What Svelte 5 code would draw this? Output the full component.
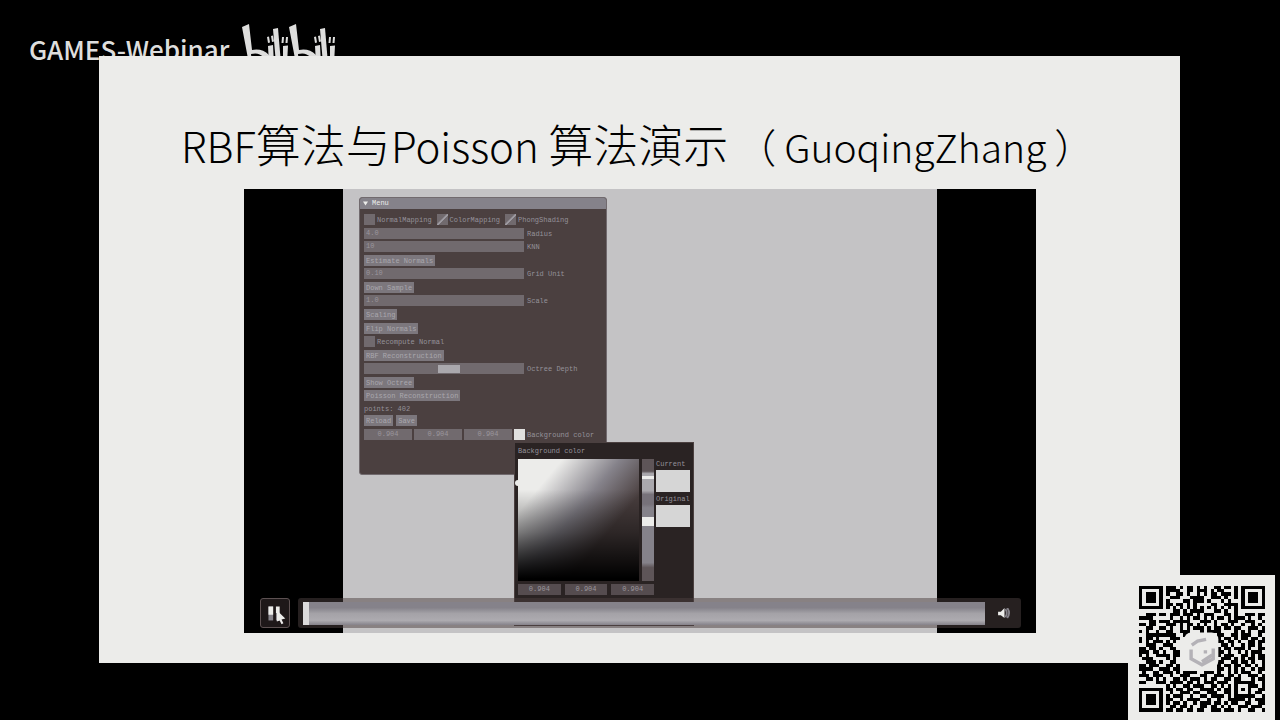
<script>
  let radius = $state('4.0');
  let knn = $state('10');
  let grid = $state('0.10');
  let scale = $state('1.0');
  let depth = $state(8);

  const channels = ['0.904', '0.904', '0.904'];

  const rows = [
    '0000000011101011010100110110100000000',
    '0000000011110011011101011000100000000',
    '0000000010011010010101101110100000000',
    '0000000001110001111001110100100000000',
    '0000000010000110111010001010000000000',
    '0000000011011010100001100111100000000',
    '0000000000000000000000000000000000000',
    '0000000000110101111000110100100000000',
    '0011101101110111010111000110100111011',
    '1111001001001010110101011010111010010',
    '0001101110111110001110100011100111001',
    '1101100011101011010100101101001001010',
    '0011001101001010111010110110110011101',
    '1010010011001110001011110000101010011',
    '0011110111100111000000011001101110010',
    '1011010001110000000000010110101101101',
    '1010111010100000000000011011010011011',
    '0011100111000000000000001101001011010',
    '1101101001100000000000010110111010011',
    '1110111100110000000000011010010101110',
    '1010010110110000000000010111001101011',
    '0111001010100000000000001110101011011',
    '0011101001100000000000011001101101001',
    '1101111011010000000000010110110110101',
    '1111001110110000000000011010101001011',
    '0100110111010111100111010010101110010',
    '1110111001001110001100111011010011101',
    '0011010100110101110101100110110001011',
    '1100011101111011010111011100000111001',
    '0000000010100110111001101010000101101',
    '0000000011011011001111010110000010011',
    '0000000001001110110011100110000110110',
    '0000000010111001001101111010000101001',
    '0000000011001011110010010011111010111',
    '0000000010110100101110110101100110011',
    '0000000001101101001101101010011101110',
    '0000000011011011011001110111010011001'
  ];

  const ring = (r, c, top, left, size) => {
    const y = r - top;
    const x = c - left;
    if (y < 0 || x < 0 || y >= size || x >= size) return null;
    const d = Math.min(x, y, size - 1 - x, size - 1 - y);
    return d !== 1;
  };

  function dark(r, c) {
    const parts = [ring(r, c, 0, 0, 7), ring(r, c, 0, 30, 7), ring(r, c, 30, 0, 7), ring(r, c, 28, 28, 5)];
    for (const p of parts) if (p !== null) return p;
    if (r === 6 && c > 7 && c < 29) return c % 2 === 0;
    if (c === 6 && r > 7 && r < 29) return r % 2 === 0;
    return rows[r][c] === '1';
  }

  let qr = '';
  for (let r = 0; r < 37; r++) {
    for (let c = 0; c < 37; c++) if (dark(r, c)) qr += `M${c} ${r}h1v1h-1z`;
  }
</script>

<div class="page">
  <header>
    <span class="brand">GAMES-Webinar</span>
    <svg class="logo" viewBox="0 0 96 40" role="img" aria-label="bilibili">
      <g id="bili">
        <path d="M0 3 7 0 10 26Q20 24 27 31L27 40H7Z" />
        <path d="M9 30Q17 28 21 33L20 40H10Z" fill="#000" />
        <path d="M25 13l2-.5 1 6-2 .5zM29 12l2-.5 1 6-2 .5zM26 22l5-1 1 19h-5z" />
        <path d="M31 5l5-1 3 36h-5z" />
        <path d="M40 13h2l-.5 6h-2zM44 13h2l-.5 6h-2zM41 22l5-.5-1 18.500h-4z" />
      </g>
      <use href="#bili" x="47" />
    </svg>
  </header>

  <main>
    <h1>
      <span class="latin">RBF</span>算法与<span class="latin">Poisson&nbsp;</span>算法演示<span class="paren">（</span><span
        class="author">GuoqingZhang</span
      ><span class="paren">）</span>
    </h1>

    <section class="video" aria-label="Video">
      <div class="canvas">
        <div class="menu">
          <div class="bar"><svg viewBox="0 0 6 5"><path d="M0 0h6L3 5z" /></svg>Menu</div>
          <div class="body">
            <div class="row checks">
              <label><input type="checkbox" />NormalMapping</label>
              <label><input type="checkbox" checked />ColorMapping</label>
              <label><input type="checkbox" checked />PhongShading</label>
            </div>
            <label class="row"><input class="field" type="text" bind:value={radius} />Radius</label>
            <label class="row"><input class="field" type="text" bind:value={knn} />KNN</label>
            <div class="row"><button>Estimate Normals</button></div>
            <label class="row"><input class="field" type="text" bind:value={grid} />Grid Unit</label>
            <div class="row"><button>Down Sample</button></div>
            <label class="row"><input class="field" type="text" bind:value={scale} />Scale</label>
            <div class="row"><button>Scaling</button></div>
            <div class="row"><button>Flip Normals</button></div>
            <div class="row"><label><input type="checkbox" />Recompute Normal</label></div>
            <div class="row"><button>RBF Reconstruction</button></div>
            <label class="row"><input class="field range" type="range" min="1" max="14" bind:value={depth} />Octree Depth</label>
            <div class="row"><button>Show Octree</button></div>
            <div class="row"><button>Poisson Reconstruction</button></div>
            <div class="row text">points: 402</div>
            <div class="row"><button>Reload</button><button>Save</button></div>
            <div class="row color">
              {#each channels as value, i}
                <input class="num" type="text" {value} aria-label={'Channel ' + (i + 1)} />
              {/each}
              <button class="swatch" aria-label="Background color"></button>
              <span>Background color</span>
            </div>
          </div>
        </div>

        <div class="picker">
          <div class="name">Background color</div>
          <div class="pick">
            <div class="left">
              <div class="shade"><i></i></div>
              <div class="hue"><i></i><i></i></div>
              <div class="nums">
                {#each channels as value, i}
                  <input class="num" type="text" {value} aria-label={'Picker channel ' + (i + 1)} />
                {/each}
              </div>
            </div>
            <div class="compare">
              <span>Current</span><b></b>
              <span>Original</span><b></b>
            </div>
          </div>
        </div>
      </div>

      <div class="controls">
        <button class="pause" aria-label="Pause">
          <svg viewBox="0 0 30 30">
            <path d="M8 8h5v15H8z" fill="#85828a" /><path d="M8 8h5v9H8zM16 8h4v7h-4z" fill="#ececea" />
            <path d="M16 15h4v8h-4z" fill="#85828a" />
            <path d="M17 12l9 9-4 1 2 4-2 1-2-4-3 1z" fill="#ececea" />
          </svg>
        </button>
        <div class="track">
          <div class="progress"><i></i></div>
          <button class="sound" aria-label="Volume">
            <svg viewBox="0 0 14 12">
              <path d="M0 4h3l4-4v11L3 8H0z" fill="#ececea" />
              <path d="M8 1q3 4.500 0 9M10 0q4 5.500 0 11" fill="none" stroke="#85828a" stroke-width="2" />
            </svg>
          </button>
        </div>
      </div>
    </section>
  </main>

  <aside>
    <svg viewBox="0 0 37 37" role="img" aria-label="QR code">
      <path d={qr} shape-rendering="crispEdges" />
      <rect x="13.300" y="13.800" width="10" height="10.400" rx="2" fill="#ececea" />
      <g fill="none" stroke="#b4b2b7" stroke-width="1">
        <path d="M15.500 17.500l1.700-1.200 2.500-.5" />
        <path d="M15.300 18.800v2.700l3.200 1.800 3.300-1.800v-3" />
        <path d="M18.500 22.400l3-2M19 19.500h1" />
      </g>
    </svg>
  </aside>
</div>

<style>
  :global(body) {
    margin: 0;
    background: #000;
  }
  .page {
    box-sizing: border-box;
    position: relative;
    min-height: 100vh;
    padding-bottom: 57px;
    background: #000;
    font-family: 'Noto Sans CJK SC', sans-serif;
    overflow: hidden;
  }
  header {
    box-sizing: border-box;
    display: flex;
    height: 56px;
    padding: 24px 0 0 29px;
    gap: 13px;
  }
  .brand {
    color: #dededd;
    font-size: 26px;
    font-weight: 500;
    line-height: 50px;
    height: 40px;
  }
  .logo {
    width: 96px;
    height: 40px;
    flex: none;
    fill: #dededd;
  }
  main {
    box-sizing: border-box;
    position: relative;
    margin: 0 100px 0 99px;
    padding: 56px 144px 30px 145px;
    background: #ececea;
  }
  h1 {
    height: 64px;
    margin: 0 -120px 13px -63px;
    color: #000;
    font-size: 45px;
    font-weight: 300;
    line-height: 64px;
    white-space: nowrap;
  }
  h1 span {
    line-height: 1;
  }
  .latin {
    font-size: 42px;
  }
  .author {
    font-size: 39px;
  }
  .paren {
    margin: 0 8px;
    font-size: 40px;
  }
  .video {
    position: relative;
    height: 444px;
    padding: 0 99px;
    background: #000;
  }
  .canvas {
    position: relative;
    height: 100%;
    background: #c4c3c5;
    font-family: 'Liberation Mono', monospace;
    font-size: 7px;
    line-height: 13px;
    color: #95929a;
  }
  .canvas button,
  .canvas input {
    box-sizing: border-box;
    margin: 0;
    padding: 0 2px;
    border: 0;
    border-radius: 0;
    height: 11px;
    font: inherit;
    color: #9b969d;
    background: #716a6e;
  }
  .canvas button {
    color: #aaa7ad;
    background: #7c777d;
  }
  .menu {
    box-sizing: border-box;
    position: absolute;
    left: 16px;
    top: 8px;
    width: 248px;
    height: 278px;
    display: flex;
    flex-direction: column;
    border: 1px solid #716a6e;
    border-radius: 3px;
    background: #4b4040;
    overflow: hidden;
  }
  .bar {
    display: flex;
    align-items: center;
    gap: 4px;
    height: 11px;
    padding-left: 3px;
    background: #85828a;
    color: #ececea;
  }
  .bar svg {
    width: 5px;
    height: 5px;
    fill: #ececea;
  }
  .body {
    display: flex;
    flex-direction: column;
    justify-content: space-between;
    height: 226px;
    padding: 5px 4px 0;
  }
  .row {
    display: flex;
    gap: 3px;
    height: 11px;
    white-space: nowrap;
  }
  .row.text {
    height: 9px;
    line-height: 11px;
  }
  .row label {
    display: flex;
    gap: 2px;
  }
  .checks {
    gap: 5px;
  }
  .canvas input[type='checkbox'] {
    appearance: none;
    width: 11px;
    padding: 0;
  }
  .canvas input[type='checkbox']:checked {
    background: linear-gradient(135deg, #716a6e 45%, #9d9aa1 46% 56%, #716a6e 57%);
  }
  .canvas .field {
    width: 160px;
  }
  .canvas .range {
    appearance: none;
    padding: 0;
  }
  .range::-webkit-slider-thumb {
    appearance: none;
    width: 22px;
    height: 8px;
    background: #aaa8ad;
  }
  .color {
    gap: 2px;
  }
  .canvas .num {
    width: 48px;
    text-align: center;
  }
  .canvas .swatch {
    width: 11px;
    padding: 0;
    background: #e0e0df;
  }
  .picker {
    box-sizing: border-box;
    position: absolute;
    left: 171px;
    top: 253px;
    width: 180px;
    height: 184px;
    padding: 3px;
    border: 1px solid #4b4040;
    background: #2a2323;
  }
  .name {
    height: 13px;
    line-height: 11px;
  }
  .pick {
    display: flex;
    gap: 2px;
    line-height: 11px;
  }
  .left {
    display: grid;
    grid-template-columns: 121px 12px;
    grid-template-rows: 122px 11px;
    gap: 3px;
  }
  .shade {
    position: relative;
    background:
      linear-gradient(to bottom, #0000 25%, #0006 60%, #000 98%),
      linear-gradient(130deg, #ececea 20%, #85828a 46%, #4b4040 68%);
  }
  .shade i {
    position: absolute;
    left: -3px;
    top: 21px;
    width: 6px;
    height: 6px;
    border-radius: 50%;
    background: #ececea;
  }
  .hue {
    display: flex;
    flex-direction: column;
    gap: 38px;
    padding-top: 17px;
    background: linear-gradient(#5e5558 0 10%, #aaa8ad 12% 26%, #77727a 29% 37%, #85828a 40% 85%, #5e5558 89%);
  }
  .hue i {
    height: 3px;
    background: #ececea;
  }
  .hue i + i {
    height: 9px;
  }
  .nums {
    grid-column: 1 / -1;
    display: flex;
    gap: 4px;
  }
  .nums .num {
    min-width: 0;
    flex: 1;
    background: #554c4f;
  }
  .compare {
    display: flex;
    flex-direction: column;
    width: 34px;
  }
  .compare b {
    height: 22px;
    margin-bottom: 2px;
    background: #d6d6d6;
  }
  .controls {
    position: absolute;
    left: 16px;
    right: 15px;
    bottom: 5px;
    display: flex;
    gap: 8px;
    height: 30px;
  }
  .controls button {
    padding: 0;
    border: 0;
    background: none;
  }
  .controls .pause {
    box-sizing: border-box;
    width: 30px;
    border: 1px solid #5d5152;
    border-radius: 3px;
    background: #1e1819;
  }
  .pause svg {
    display: block;
    width: 28px;
    height: 28px;
  }
  .track {
    box-sizing: border-box;
    flex: 1;
    display: flex;
    align-items: center;
    gap: 13px;
    padding: 0 10px 0 5px;
    border-radius: 3px;
    background: #4b404080;
  }
  .progress {
    flex: 1;
    height: 23px;
    background: linear-gradient(#85828a 25%, #a4a2a7 50%, #adabb0 80%, #85828a);
  }
  .progress i {
    display: block;
    width: 6px;
    height: 100%;
    background: #dcdbdc;
  }
  .sound svg {
    display: block;
    width: 13px;
    height: 11px;
  }
  aside {
    box-sizing: border-box;
    position: absolute;
    right: 5px;
    bottom: 0;
    width: 147px;
    padding: 10px 10px 8px 11px;
    background: #ececea;
  }
  aside svg {
    display: block;
    width: 126px;
    height: 127px;
  }
</style>
